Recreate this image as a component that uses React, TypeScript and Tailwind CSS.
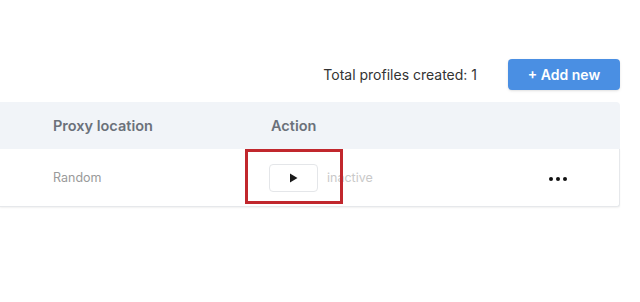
export default function App() {
  return (
    <div className="w-[640px] h-[302px] bg-white overflow-hidden font-['Inter',sans-serif]">
      <div className="w-[620px] pt-[59px]">
        <div className="flex items-center justify-end gap-[31px] h-[31px]">
          <span className="text-[14px] text-[#333]">Total profiles created: 1</span>
          <button className="w-[112px] h-[31px] rounded-[4px] bg-[#4a8fe3] text-white text-[14px] font-semibold shadow-sm">
            + Add new
          </button>
        </div>

        <div className="mt-[12px] rounded-tr-[4px] bg-[#f1f4f8] h-[47px] flex items-center pl-[53px] text-[14.5px] font-semibold text-[#6b717a]">
          <div className="w-[218px]">Proxy location</div>
          <div>Action</div>
        </div>

        <div className="relative h-[58px] flex items-center pl-[53px] bg-white border-b border-r border-[#e6e8eb] rounded-br-[3px] shadow-[0_1px_2px_rgba(0,0,0,0.06)]">
          <div className="w-[216px] text-[12.5px] text-[#9a9a9a] pt-[2px]">Random</div>
          <button className="w-[49px] h-[28px] border border-[#e4e6e9] rounded-[4px] flex items-center justify-center">
            <svg width="9" height="10" viewBox="0 0 9 10">
              <path d="M1 0.5 L8.5 5 L1 9.5 Z" fill="#1a1a1a" />
            </svg>
          </button>
          <span className="ml-[9px] text-[12.5px] text-[#c9c9c9] pt-[2px]">inactive</span>
          <div className="ml-auto mr-[52px] flex gap-[3px] pt-[2px]">
            <span className="w-[4px] h-[4px] rounded-full bg-[#111]" />
            <span className="w-[4px] h-[4px] rounded-full bg-[#111]" />
            <span className="w-[4px] h-[4px] rounded-full bg-[#111]" />
          </div>
          <div className="absolute left-[245px] top-[0px] w-[98px] h-[55px] border-[3px] border-[#c1272d]" />
        </div>
      </div>
    </div>
  );
}
